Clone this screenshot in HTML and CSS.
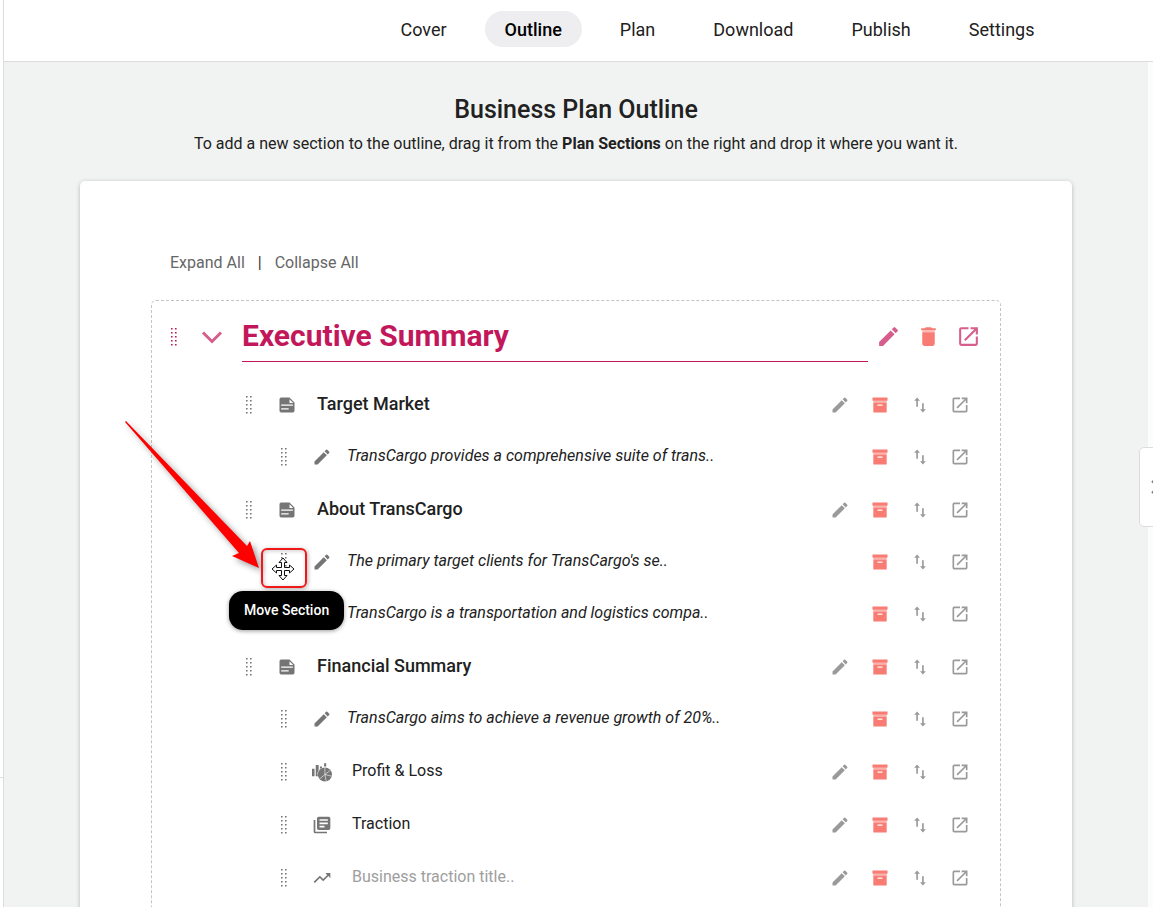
FILE: index.html
```html
<!DOCTYPE html>
<html lang="en">
<head>
    <meta charset="UTF-8">
    <title>Business Plan Outline</title>
    <link rel="stylesheet" href="styles.css">
</head>
<body>
<svg class="sprite" aria-hidden="true">
    <symbol id="grip" viewBox="0 0 6 18">
        <path d="M0 0h1.600v1.600H0zM4 0h1.600v1.600H4zM0 4h1.600v1.600H0zM4 4h1.600v1.600H4zM0 8h1.600v1.600H0zM4 8h1.600v1.600H4zM0 12h1.600v1.600H0zM4 12h1.600v1.600H4zM0 16h1.600v1.600H0zM4 16h1.600v1.600H4z"/>
    </symbol>
    <symbol id="chevron" viewBox="0 0 24 24">
        <path d="M3 7.500l9 9 9-9" fill="none" stroke="currentColor" stroke-width="3"/>
    </symbol>
    <symbol id="pencil" viewBox="0 0 24 24">
        <path d="M3 17.250V21h3.750L17.810 9.940l-3.750-3.750L3 17.250zM20.710 7.040a1 1 0 0 0 0-1.410l-2.340-2.340a1 1 0 0 0-1.410 0l-1.830 1.830 3.750 3.750 1.830-1.830z"/>
    </symbol>
    <symbol id="trash" viewBox="0 0 24 24">
        <path d="M6 8h12v11a2 2 0 0 1-2 2H8a2 2 0 0 1-2-2V8zM19 4h-3.500l-1-1h-5l-1 1H5v2h14V4z"/>
        <path d="M6 6h12v2H6z" opacity=".5"/>
    </symbol>
    <symbol id="open" viewBox="0 0 24 24">
        <path d="M19 19H5V5h7V3H5a2 2 0 0 0-2 2v14a2 2 0 0 0 2 2h14a2 2 0 0 0 2-2v-7h-2v7zM14 3v2h3.590l-9.830 9.830 1.410 1.410L19 6.410V10h2V3h-7z"/>
    </symbol>
    <symbol id="archive" viewBox="0 0 24 24">
        <path d="M3 3h18v4H3zM4 9h16v12H4V9zm5 2.500V13h6v-1.500H9z"/>
        <path d="M4 7h16v2H4z" opacity=".6"/>
    </symbol>
    <symbol id="swap" viewBox="0 0 24 24">
        <path d="M8.500 3L5 7h2.500v7h2V7H12zM15.500 21l3.500-4h-2.500v-7h-2v7H12z"/>
    </symbol>
    <symbol id="doc" viewBox="0 0 24 24">
        <path d="M15 3H5a2 2 0 0 0-2 2v14a2 2 0 0 0 2 2h14a2 2 0 0 0 2-2V9l-6-6zM5 11.500h14v1.500H5v-1.500zm0 4.500h9v1.500H5V16zm10-11l4.500 4.500H15V5z" fill-rule="evenodd"/>
    </symbol>
    <symbol id="chart" viewBox="0 0 24 24">
        <path d="M0 8h3v9H0zM4.500 3.500H8v6A8 8 0 0 0 7 17H4.500zM9.500 5.500H12v1.500L9.500 8.500zM14.500 1.500H17v4h-2.500z"/>
        <circle cx="15.500" cy="15" r="8.500"/>
        <path d="M15.500 6.500V15L22 10M15.500 15l-6.500 5.500M15.500 15l1.500 8M15.500 15l8 2" fill="none" stroke="#fff" stroke-width=".7"/>
    </symbol>
    <symbol id="library" viewBox="0 0 24 24">
        <path d="M4 6H2v14a2 2 0 0 0 2 2h14v-2H4V6zm16-4H8a2 2 0 0 0-2 2v12a2 2 0 0 0 2 2h12a2 2 0 0 0 2-2V4a2 2 0 0 0-2-2zm-1 9H9V9h10v2zm-4 4H9v-2h6v2zm4-8H9V5h10v2z"/>
    </symbol>
    <symbol id="trend" viewBox="0 0 24 24">
        <path d="M16 6l2.290 2.290-4.880 4.880-4-4L2 16.590 3.410 18l6-6 4 4 6.300-6.290L22 12V6z"/>
    </symbol>
</svg>

<aside class="rail"></aside>

<div class="app">
    <header class="topbar">
        <nav class="nav">
            <a href="#">Cover</a>
            <a href="#" class="active">Outline</a>
            <a href="#">Plan</a>
            <a href="#">Download</a>
            <a href="#">Publish</a>
            <a href="#">Settings</a>
        </nav>
    </header>

    <div class="workspace">
        <main class="pane">
            <h1 class="page-title">Business Plan Outline</h1>
            <p class="hint">To add a new section to the outline, drag it from the <b>Plan Sections</b> on the right and drop it where you want it.</p>

            <div class="card">
                <div class="tools">
                    <button type="button">Expand All</button>
                    <span>|</span>
                    <button type="button">Collapse All</button>
                </div>

                <section class="outline">
                    <div class="head">
                        <button type="button" class="grip" aria-label="Move Section"><svg><use href="#grip"/></svg></button>
                        <button type="button" class="kind" aria-label="Collapse"><svg><use href="#chevron"/></svg></button>
                        <h2>Executive Summary</h2>
                        <div class="actions">
                            <button type="button" aria-label="Edit"><svg><use href="#pencil"/></svg></button>
                            <button type="button" class="danger" aria-label="Delete"><svg><use href="#trash"/></svg></button>
                            <button type="button" aria-label="Open"><svg><use href="#open"/></svg></button>
                        </div>
                    </div>

                    <div class="row topic">
                        <button type="button" class="grip" aria-label="Move Section"><svg><use href="#grip"/></svg></button>
                        <span class="kind"><svg><use href="#doc"/></svg></span>
                        <h3>Target Market</h3>
                        <div class="actions">
                            <button type="button" aria-label="Edit"><svg><use href="#pencil"/></svg></button>
                            <button type="button" class="danger" aria-label="Archive"><svg><use href="#archive"/></svg></button>
                            <button type="button" aria-label="Reorder"><svg><use href="#swap"/></svg></button>
                            <button type="button" aria-label="Open"><svg><use href="#open"/></svg></button>
                        </div>
                    </div>
                    <div class="row note">
                        <button type="button" class="grip" aria-label="Move Section"><svg><use href="#grip"/></svg></button>
                        <span class="kind"><svg><use href="#pencil"/></svg></span>
                        <p>TransCargo provides a comprehensive suite of trans..</p>
                        <div class="actions">
                            <button type="button" class="danger" aria-label="Archive"><svg><use href="#archive"/></svg></button>
                            <button type="button" aria-label="Reorder"><svg><use href="#swap"/></svg></button>
                            <button type="button" aria-label="Open"><svg><use href="#open"/></svg></button>
                        </div>
                    </div>

                    <div class="row topic">
                        <button type="button" class="grip" aria-label="Move Section"><svg><use href="#grip"/></svg></button>
                        <span class="kind"><svg><use href="#doc"/></svg></span>
                        <h3>About TransCargo</h3>
                        <div class="actions">
                            <button type="button" aria-label="Edit"><svg><use href="#pencil"/></svg></button>
                            <button type="button" class="danger" aria-label="Archive"><svg><use href="#archive"/></svg></button>
                            <button type="button" aria-label="Reorder"><svg><use href="#swap"/></svg></button>
                            <button type="button" aria-label="Open"><svg><use href="#open"/></svg></button>
                        </div>
                    </div>
                    <div class="row note hovered">
                        <button type="button" class="grip" aria-label="Move Section"><svg><use href="#grip"/></svg></button>
                        <span class="kind"><svg><use href="#pencil"/></svg></span>
                        <p>The primary target clients for TransCargo's se..</p>
                        <div class="actions">
                            <button type="button" class="danger" aria-label="Archive"><svg><use href="#archive"/></svg></button>
                            <button type="button" aria-label="Reorder"><svg><use href="#swap"/></svg></button>
                            <button type="button" aria-label="Open"><svg><use href="#open"/></svg></button>
                        </div>
                        <svg class="pointer" viewBox="0 0 140 156">
                            <path d="M5 4L126 129l3-5 9 27-27-12 7-3L4 5z"/>
                        </svg>
                        <div class="marker"></div>
                        <svg class="cursor" viewBox="0 0 24 24">
                            <path d="M12 1l4 4.500h-2.500v5h5V8L23 12l-4.500 4v-2.500h-5v5H16L12 23l-4-4.500h2.500v-5h-5V16L1 12l4.500-4v2.500h5v-5H8z"/>
                        </svg>
                        <div class="tooltip" role="tooltip">Move Section</div>
                    </div>
                    <div class="row note">
                        <button type="button" class="grip" aria-label="Move Section"><svg><use href="#grip"/></svg></button>
                        <span class="kind"><svg><use href="#pencil"/></svg></span>
                        <p>TransCargo is a transportation and logistics compa..</p>
                        <div class="actions">
                            <button type="button" class="danger" aria-label="Archive"><svg><use href="#archive"/></svg></button>
                            <button type="button" aria-label="Reorder"><svg><use href="#swap"/></svg></button>
                            <button type="button" aria-label="Open"><svg><use href="#open"/></svg></button>
                        </div>
                    </div>

                    <div class="row topic">
                        <button type="button" class="grip" aria-label="Move Section"><svg><use href="#grip"/></svg></button>
                        <span class="kind"><svg><use href="#doc"/></svg></span>
                        <h3>Financial Summary</h3>
                        <div class="actions">
                            <button type="button" aria-label="Edit"><svg><use href="#pencil"/></svg></button>
                            <button type="button" class="danger" aria-label="Archive"><svg><use href="#archive"/></svg></button>
                            <button type="button" aria-label="Reorder"><svg><use href="#swap"/></svg></button>
                            <button type="button" aria-label="Open"><svg><use href="#open"/></svg></button>
                        </div>
                    </div>
                    <div class="row note">
                        <button type="button" class="grip" aria-label="Move Section"><svg><use href="#grip"/></svg></button>
                        <span class="kind"><svg><use href="#pencil"/></svg></span>
                        <p>TransCargo aims to achieve a revenue growth of 20%..</p>
                        <div class="actions">
                            <button type="button" class="danger" aria-label="Archive"><svg><use href="#archive"/></svg></button>
                            <button type="button" aria-label="Reorder"><svg><use href="#swap"/></svg></button>
                            <button type="button" aria-label="Open"><svg><use href="#open"/></svg></button>
                        </div>
                    </div>
                    <div class="row item">
                        <button type="button" class="grip" aria-label="Move Section"><svg><use href="#grip"/></svg></button>
                        <span class="kind"><svg><use href="#chart"/></svg></span>
                        <p>Profit &amp; Loss</p>
                        <div class="actions">
                            <button type="button" aria-label="Edit"><svg><use href="#pencil"/></svg></button>
                            <button type="button" class="danger" aria-label="Archive"><svg><use href="#archive"/></svg></button>
                            <button type="button" aria-label="Reorder"><svg><use href="#swap"/></svg></button>
                            <button type="button" aria-label="Open"><svg><use href="#open"/></svg></button>
                        </div>
                    </div>
                    <div class="row item">
                        <button type="button" class="grip" aria-label="Move Section"><svg><use href="#grip"/></svg></button>
                        <span class="kind"><svg><use href="#library"/></svg></span>
                        <p>Traction</p>
                        <div class="actions">
                            <button type="button" aria-label="Edit"><svg><use href="#pencil"/></svg></button>
                            <button type="button" class="danger" aria-label="Archive"><svg><use href="#archive"/></svg></button>
                            <button type="button" aria-label="Reorder"><svg><use href="#swap"/></svg></button>
                            <button type="button" aria-label="Open"><svg><use href="#open"/></svg></button>
                        </div>
                    </div>
                    <div class="row item empty">
                        <button type="button" class="grip" aria-label="Move Section"><svg><use href="#grip"/></svg></button>
                        <span class="kind"><svg><use href="#trend"/></svg></span>
                        <p>Business traction title..</p>
                        <div class="actions">
                            <button type="button" aria-label="Edit"><svg><use href="#pencil"/></svg></button>
                            <button type="button" class="danger" aria-label="Archive"><svg><use href="#archive"/></svg></button>
                            <button type="button" aria-label="Reorder"><svg><use href="#swap"/></svg></button>
                            <button type="button" aria-label="Open"><svg><use href="#open"/></svg></button>
                        </div>
                    </div>
                </section>
            </div>
        </main>
        <div class="gutter"></div>
    </div>
</div>

<button type="button" class="drawer-tab" aria-label="Plan Sections">
    <svg viewBox="0 0 12 16"><path d="M1 2l6 6-6 6"/></svg>
</button>
</body>
</html>
```

FILE: styles.css
```css
* { box-sizing: border-box; }
body {
    margin: 0;
    height: 100vh;
    display: flex;
    overflow: hidden;
    font-family: Roboto, "Liberation Sans", sans-serif;
    font-size: 16px;
    line-height: 24px;
    color: #212121;
    background: #fff;
}
h1, h2, h3, p { margin: 0; }
button {
    padding: 0;
    border: none;
    background: none;
    font: inherit;
    color: inherit;
    cursor: pointer;
}
svg { display: block; fill: currentColor; }
.sprite { position: absolute; width: 0; height: 0; }

/* left rail */
.rail {
    width: 4px;
    flex: none;
    display: flex;
    flex-direction: column;
    justify-content: flex-end;
    border-right: 1px solid #dcdcdc;
}
.rail::after {
    content: "";
    height: 129px;
    border-top: 1px solid #dcdcdc;
}

.app {
    flex: 1;
    min-width: 0;
    display: flex;
    flex-direction: column;
}

/* top navigation */
.topbar {
    flex: none;
    display: flex;
    justify-content: center;
    padding: 11px 0 14px 278px;
    border-bottom: 1px solid #dcdcdc;
}
.nav { display: flex; gap: 18px; }
.nav a {
    padding: 2px 20px 0;
    border-radius: 18px;
    font-size: 18px;
    line-height: 34px;
    color: #212121;
    text-decoration: none;
}
.nav a.active {
    background: #eeeef0;
    color: #000;
    font-weight: 500;
}

.workspace {
    flex: 1;
    min-height: 0;
    display: flex;
    background: #f1f3f2;
}
.pane {
    flex: 1;
    min-width: 0;
    padding: 32px 24px 40px;
    overflow-y: auto;
    scrollbar-width: none;
}
.gutter {
    width: 5px;
    background: #fcfcfc;
}
.page-title {
    font-size: 25px;
    line-height: 32px;
    font-weight: 500;
    text-align: center;
}
.hint {
    margin-top: 6px;
    text-align: center;
}

.card {
    max-width: 992px;
    margin: 25px auto 0;
    padding: 70px 71px;
    background: #fff;
    border-radius: 5px;
    box-shadow: 0 1px 4px rgba(0, 0, 0, .25);
}
.tools {
    display: flex;
    gap: 13px;
    padding: 0 19px;
    color: #666;
}
.tools span { color: #333; }

/* outline tree */
.outline {
    margin-top: 25px;
    padding-bottom: 16px;
    border: 1px dashed #c4c4c4;
    border-radius: 5px;
}
.head, .row {
    display: flex;
    align-items: center;
}
.grip {
    width: 30px;
    height: 30px;
    flex: none;
    display: flex;
    align-items: center;
    justify-content: center;
    color: #757575;
}
.grip svg { width: 6px; height: 18px; }
.kind {
    width: 46px;
    flex: none;
    display: flex;
    justify-content: center;
    color: #757575;
}
.kind svg { width: 20px; height: 20px; }

.head {
    padding: 10px 12px 0 7px;
    margin-bottom: 16px;
    color: #c2185b;
}
.head .grip { color: #c2185b; }
.head .kind { color: #d65d8c; }
.head .kind svg { width: 24px; height: 24px; }
.head h2 {
    flex: 1;
    margin-left: 7px;
    padding: 3px 0;
    border-bottom: 1px solid #c2185b;
    font-size: 30px;
    line-height: 44px;
    font-weight: 700;
}

.row { height: 53px; }
.topic { padding: 0 20px 0 82px; }
.note, .item { padding: 0 20px 0 117px; }
.note { height: 52px; }
.row h3, .row p {
    flex: 1;
    min-width: 0;
    padding: 0 0 1px 7px;
}
.row h3 {
    font-size: 18px;
    font-weight: 500;
}
.row.note p {
    padding: 0 0 2px 2px;
    font-style: italic;
}
.empty p { color: #9e9e9e; }

.actions { display: flex; color: #9a9a9a; }
.actions button {
    width: 40px;
    height: 40px;
    display: flex;
    align-items: center;
    justify-content: center;
}
.actions svg { width: 20px; height: 20px; }
.actions .danger { color: #f87c73; }
.head .actions { color: #d65d8c; }
.head .actions svg { width: 25px; height: 25px; }

/* drag handle callout */
.hovered { position: relative; }
.pointer, .marker, .cursor, .tooltip {
    position: absolute;
    z-index: 1;
    pointer-events: none;
}
.pointer {
    left: -31px;
    top: -119px;
    width: 140px;
    height: 156px;
    overflow: visible;
    fill: #f00;
    filter: drop-shadow(3px 3px 3px rgba(0, 0, 0, .4));
}
.marker {
    left: 109px;
    top: 12px;
    width: 46px;
    height: 40px;
    border: 2px solid #f01818;
    border-radius: 6px;
    box-shadow: 1px 1px 4px rgba(0, 0, 0, .3), inset 1px 1px 4px rgba(0, 0, 0, .2);
}
.cursor {
    left: 119px;
    top: 21px;
    width: 24px;
    height: 24px;
    fill: #fff;
    stroke: #111;
    stroke-width: 1;
}
.tooltip {
    left: 77px;
    top: 55px;
    padding: 9px 15px 10px;
    border-radius: 14px;
    background: #000;
    color: #fff;
    font-size: 14px;
    line-height: 20px;
    font-weight: 500;
    white-space: nowrap;
    box-shadow: 0 1px 4px rgba(0, 0, 0, .4);
}

/* tab of the sections drawer, tucked under the window edge */
.drawer-tab {
    position: fixed;
    right: -10px;
    top: 447px;
    width: 24px;
    height: 80px;
    padding-left: 11px;
    border: 1px solid #dcdcdc;
    border-radius: 5px;
    background: #fff;
}
.drawer-tab svg {
    width: 12px;
    height: 16px;
    fill: none;
    stroke: #757575;
    stroke-width: 2;
}
```
